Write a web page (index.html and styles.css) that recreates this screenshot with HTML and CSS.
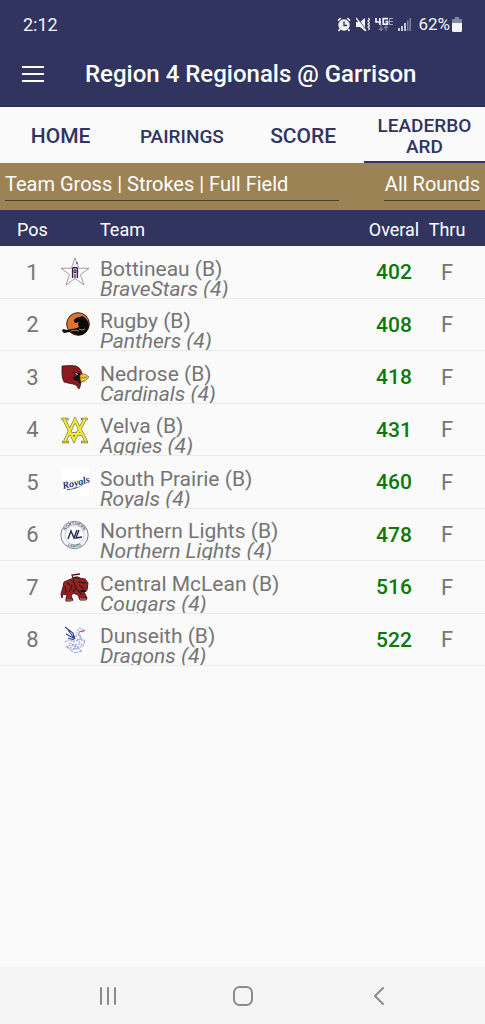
FILE: index.html
```
<!DOCTYPE html>
<html lang="en">
<head>
<meta charset="UTF-8">
<meta name="viewport" content="width=device-width,initial-scale=1">
<title>Region 4 Regionals @ Garrison</title>
<link rel="stylesheet" href="styles.css">
</head>
<body>
<div class="status">
  <span class="clock">2:12</span>
  <div class="status-icons">
    <!-- alarm -->
    <svg width="14" height="15" viewBox="0 0 14 15">
      <path d="M1 3.6 3.8 1M13 3.6 10.200 1M3 12l-1.500 2M11 12l1.500 2" stroke="#f4f5fa" stroke-width="1.600" fill="none"/>
      <circle cx="7" cy="8" r="5.700" fill="#f4f5fa"/>
      <path d="M7 4.500v4h3" stroke="#30345e" stroke-width="1.300" fill="none"/>
    </svg>
    <!-- muted, vibrate -->
    <svg width="14" height="15" viewBox="0 0 14 15">
      <path d="M0 5h4l5-4v13L4 10H0z" fill="#f4f5fa"/>
      <path d="M1 1 9 12" stroke="#30345e" stroke-width="1.400"/>
      <path d="M0 1 10 14" stroke="#f4f5fa" stroke-width="1.300"/>
      <path d="M12.500 1l1 1.500-1.500 1.500 1.500 1.500-1.500 1.500 1.500 1.500-1.500 1.500 1.500 1.500-1 1.500" stroke="#f4f5fa" stroke-width="1.300" fill="none"/>
    </svg>
    <!-- 4G LTE -->
    <svg width="18" height="15" viewBox="0 0 18 15">
      <path d="M1 1v4h5M4.800 1v7M13 1.700H8.200v5.500h4.300V4.500h-2" stroke="#f4f5fa" stroke-width="1.700" fill="none"/>
      <path d="M14 1.500h4M14.500 1v6.500H18M14.500 4.500H18" stroke="#a3a5bd" stroke-width="1" fill="none"/>
      <path d="M6 8v5.500M4 11.500l2 2 2-2M11 14V9M9 11l2-2 2 2" stroke="#7e81a1" stroke-width="1.200" fill="none"/>
    </svg>
    <!-- signal -->
    <svg width="13" height="15" viewBox="0 0 13 15">
      <path d="M1 11v3M4 9v5M7 6v8" stroke="#f4f5fa" stroke-width="1.500"/>
      <path d="M9.700 3.500V14M12.200 1v13" stroke="#7e81a1" stroke-width="1.500"/>
    </svg>
    <span class="percent">62%</span>
    <svg width="10" height="15" viewBox="0 0 10 15">
      <path d="M3 0h4v2h2q1 0 1 1v3H0V3q0-1 1-1h2z" fill="#8386a6"/>
      <path d="M0 6h10v7.500q0 1.500-1.500 1.500h-7Q0 15 0 13.500z" fill="#f4f5fa"/>
    </svg>
  </div>
</div>

<header>
  <button class="menu" aria-label="Menu">
    <svg width="24" height="18" viewBox="0 0 24 18"><path d="M1 2h22M1 9h22M1 16h22" stroke="#fff" stroke-width="2.200"/></svg>
  </button>
  <h1>Region 4 Regionals @ Garrison</h1>
</header>

<nav class="tabs">
  <a href="#home">HOME</a>
  <a href="#pairings" class="small">PAIRINGS</a>
  <a href="#score">SCORE</a>
  <a href="#leaderboard" class="small active" aria-current="page">LEADERBOARD</a>
</nav>

<form class="filters">
  <select class="board" aria-label="Leaderboard">
    <option>Team Gross | Strokes | Full Field</option>
  </select>
  <select class="rounds" aria-label="Rounds">
    <option>All Rounds</option>
  </select>
</form>

<main>
<table>
  <thead>
    <tr><th class="pos">Pos</th><th class="logo"></th><th class="team">Team</th><th class="total">Overal</th><th class="thru">Thru</th></tr>
  </thead>
  <tbody>
    <tr>
      <td class="pos">1</td>
      <td class="logo"><svg viewBox="0 0 30 30">
        <path d="M15 1l3.600 10.300H29l-8.600 6.300L24 28l-9-6.600L6 28l3.600-10.400L1 11.300h10.400z" fill="#fff" stroke="#8a7d92" stroke-width=".8"/>
        <path d="M12.500 21v-9q0-1.500 2.500-1.500t2.500 1.500v9" fill="#d9cade" stroke="#3a2146" stroke-width="1.300"/>
        <path d="M14 13h2v2.500h-2zM15 17v4M17 5v2" fill="none" stroke="#3a2146" stroke-width="1"/>
      </svg></td>
      <td class="team"><div><span>Bottineau (B)</span><em>BraveStars (4)</em></div></td>
      <td class="total">402</td><td class="thru">F</td>
    </tr>
    <tr>
      <td class="pos">2</td>
      <td class="logo"><svg viewBox="0 0 30 30">
        <circle cx="18" cy="14" r="11.300" fill="#dc762c" stroke="#33231b"/>
        <path d="M14 10q2-3 6-3l2-1 2 1q4 3 5 8-1 6-4 8-3 3-7 2l-4-1-4-2-6 1-2-2 1-2 4 1 5-1 5-1 2-1-1-3 1-2-3 1-2-1z" fill="#090909"/>
        <path d="M11 21l4-1 4 1M19 19l3 1 3-1" stroke="#d5bfa7" stroke-width=".7" fill="none"/>
      </svg></td>
      <td class="team"><div><span>Rugby (B)</span><em>Panthers (4)</em></div></td>
      <td class="total">408</td><td class="thru">F</td>
    </tr>
    <tr>
      <td class="pos">3</td>
      <td class="logo"><svg viewBox="0 0 30 30">
        <path d="M2 4q9-1 14 0 4 1 6 7l-1 8q0 5-2 8l-3-4-3-1-5-1-4-1q-2-4-2-8z" fill="#8c1820" stroke="#41161b" stroke-width=".8"/>
        <path d="M12 10l8 1 2 6-2 5-2-3-4-1-1-3 4-1z" fill="#151315"/>
        <path d="M15 11l3 1-1 1z" fill="#fff"/>
        <path d="M20 13q4-3 9 2l-4 4-4 1-1-3z" fill="#f0c52f" stroke="#54431b" stroke-width=".6"/>
        <path d="M20 16l7-1" stroke="#8d681b" stroke-width=".7"/>
      </svg></td>
      <td class="team"><div><span>Nedrose (B)</span><em>Cardinals (4)</em></div></td>
      <td class="total">418</td><td class="thru">F</td>
    </tr>
    <tr>
      <td class="pos">4</td>
      <td class="logo"><svg viewBox="0 0 30 30">
        <g fill="none" stroke="#77733a" stroke-width="3.400">
          <path d="M4 4l10 21L25 4M5 26L15 5l11 21M9 19h13"/><path d="M1.500 4h7M21 4h7M2 27h7M21 27h7" stroke-width="2.400"/>
        </g>
        <g fill="none" stroke="#f0e93c" stroke-width="2.200">
          <path d="M4 4l10 21L25 4M5 26L15 5l11 21M9 19h13"/><path d="M2 4h6M22 4h6M2.500 27h6M21.500 27h6" stroke-width="1.200"/>
        </g>
      </svg></td>
      <td class="team"><div><span>Velva (B)</span><em>Aggies (4)</em></div></td>
      <td class="total">431</td><td class="thru">F</td>
    </tr>
    <tr>
      <td class="pos">5</td>
      <td class="logo"><svg viewBox="0 0 30 30">
        <path d="M1 1h28v28H1z" fill="#fff"/>
        <text x="2" y="19" class="script" transform="rotate(-14 15 15)">Royals</text>
        <path d="M7 22q10 0 18-6-6 6-18 7z" fill="#26346e"/>
      </svg></td>
      <td class="team"><div><span>South Prairie (B)</span><em>Royals (4)</em></div></td>
      <td class="total">460</td><td class="thru">F</td>
    </tr>
    <tr>
      <td class="pos">6</td>
      <td class="logo"><svg viewBox="0 0 30 30">
        <defs>
          <path id="arc-top" d="M4.500 15a10 10 0 0 1 20 0"/>
          <path id="arc-bottom" d="M2 15a12.500 12.500 0 0 0 25 0"/>
        </defs>
        <circle cx="14.500" cy="15" r="13.700" fill="#f3f4f7" stroke="#626b84" stroke-width=".8"/>
        <circle cx="14.500" cy="15" r="9.500" fill="#fff" stroke="#a1a7b6" stroke-width=".5"/>
        <g class="ring" text-anchor="middle">
          <text><textPath href="#arc-top" startOffset="50%">NORTHERN</textPath></text>
          <text><textPath href="#arc-bottom" startOffset="50%">LIGHTS</textPath></text>
        </g>
        <path d="M8 19l3-8 3 7 3-8M19 10l-3 8 6-1" fill="none" stroke="#252b4e" stroke-width="1.400"/>
      </svg></td>
      <td class="team"><div><span>Northern Lights (B)</span><em>Northern Lights (4)</em></div></td>
      <td class="total">478</td><td class="thru">F</td>
    </tr>
    <tr>
      <td class="pos">7</td>
      <td class="logo"><svg viewBox="0 0 30 30">
        <path d="M20 6l-3-1-4 1-1-3 8-1" fill="none" stroke="#4b1c1d" stroke-width="1.300"/>
        <path d="M4 10l7-3 7-1 7 1 3 4-1 7-3 2 3 6-1 2h-6l-2-5-5-2-2 3 2 4-2 1H6v-2l1-4-4-1-1 4-1-4 2-7z" fill="#9c2023" stroke="#451719" stroke-width="1"/>
        <path d="M7 11l5 3-3 6M13 8l3 8-3 4M18 10l8 1M19 13l5 4M17 17l5 6M5 14l1 7M21 26h5M8 28l4-1" fill="none" stroke="#42181a" stroke-width="1.400"/>
        <path d="M20 18h6v2h-5z" fill="#211214"/>
        <path d="M20 27h6M7 28h5" stroke="#e7cdcd" stroke-width=".7"/>
      </svg></td>
      <td class="team"><div><span>Central McLean (B)</span><em>Cougars (4)</em></div></td>
      <td class="total">516</td><td class="thru">F</td>
    </tr>
    <tr>
      <td class="pos">8</td>
      <td class="logo"><svg viewBox="0 0 30 30">
        <path d="M4 1h22v28H4z" fill="#fff"/>
        <path d="M5 2l8 6 2 6M8 5l6 8M6 9l9 5M8 13l6 2" fill="none" stroke="#343f8d" stroke-width="1.200"/>
        <path d="M16 12q1-8 4-9l3 2-4 3 2 5 4 3-2 5-5 2-7-3-5 2 5 3 7-2 4 3-6 2M13 17l8-3M18 9l5 8M9 18l10 4M5 17l4-2 6 2M7 22l10 2M12 20l8-1M11 26l5 2M17 14l5 6" fill="none" stroke="#9da5d5" stroke-width="1.200" stroke-dasharray="2 1"/>
        <path d="M19 7l3-1M22 7l3-2" stroke="#d24b7b" stroke-width="1.300"/>
      </svg></td>
      <td class="team"><div><span>Dunseith (B)</span><em>Dragons (4)</em></div></td>
      <td class="total">522</td><td class="thru">F</td>
    </tr>
  </tbody>
</table>
</main>

<footer>
  <button aria-label="Recent apps"><svg width="20" height="20" viewBox="0 0 20 20"><path d="M3 2v16M10 2v16M17 2v16"/></svg></button>
  <button aria-label="Home"><svg width="20" height="20" viewBox="0 0 20 20"><rect x="1" y="1" width="18" height="18" rx="5.500"/></svg></button>
  <button aria-label="Back"><svg width="20" height="20" viewBox="0 0 20 20"><path d="M15 2L7 10l8 8"/></svg></button>
</footer>
</body>
</html>
```

FILE: styles.css
```
:root{
  --navy:#30345e;--gold:#9b8355;--bg:#fafafa;--txt:#757575;--score:#0b780b}
*{box-sizing:border-box}
body{margin:0;min-height:100vh;display:flex;flex-direction:column;font-family:Roboto,"Liberation Sans",sans-serif;background:var(--bg);color:var(--txt)}
button{border:none;background:none;padding:0;cursor:pointer}
svg{display:block}

.status{height:48px;padding:0 23px;display:flex;align-items:center;justify-content:space-between;background:var(--navy);color:#f4f5fa;font-size:18px}
.status-icons{display:flex;align-items:center;gap:5px}
.percent{margin:0 -3px 0 2px;font-size:17px}

header{height:59px;padding:0 21px 6px;display:flex;align-items:center;background:var(--navy);color:#fff;border-bottom:1px solid #24284c}
.menu{width:24px;margin-right:40px}
h1{margin:0;font-size:24px;font-weight:500;white-space:nowrap}

.tabs{display:flex;height:56px}
.tabs a{
  flex:1 1 0;display:flex;align-items:center;justify-content:center;padding:4px 12px 0;
  border-bottom:2px solid transparent;color:var(--navy);font-size:21px;font-weight:500;
  line-height:21px;text-align:center;text-decoration:none;word-break:break-all}
.tabs .small{font-size:19px}
.tabs .active{border-bottom-color:var(--navy)}

.filters{display:flex;justify-content:space-between;height:47px;padding:5px 5px 0;background:var(--gold)}
select{
  appearance:none;height:33px;padding:0;border:none;border-bottom:1px solid #4c3f27;border-radius:0;
  background:none;color:#fff;font:20px Roboto,"Liberation Sans",sans-serif}
.board{flex:0 1 334px}
.rounds{text-align:right}

main{flex:1}
table{width:100%;border-spacing:0;table-layout:fixed}
th,td{padding:0}
th{height:36px;padding-top:2px;background:var(--navy);color:#fff;font-size:18px;font-weight:400}
td{border-bottom:1px solid #ebebeb;font-size:22px}
tbody tr{height:52px}
tbody tr:nth-child(odd){height:53px}
.pos{width:60px;padding-left:5px;text-align:center}
.logo{width:30px}
.logo svg{width:30px;height:30px}
.team{padding-left:10px;text-align:left}
.team div{height:51px;padding-top:12px;font-size:21px;line-height:20px;overflow:hidden;white-space:nowrap}
.team span,.team em{display:block}
.total{width:60px;text-align:center}
td.total{color:var(--score);font-size:21px;font-weight:500}
.thru{width:61px;padding-right:15px;text-align:center}
.script{font:italic bold 10px "Liberation Serif",serif;fill:#26346e}
.ring{font:bold 4px "Liberation Sans",sans-serif;fill:#4b536f}

footer{height:57px;padding:0 40px;display:flex;align-items:center;background:#f5f5f5}
footer button{flex:1;display:flex;justify-content:center}
footer svg{fill:none;stroke:#8b8b8b;stroke-width:2;stroke-linecap:round;stroke-linejoin:round}
```
